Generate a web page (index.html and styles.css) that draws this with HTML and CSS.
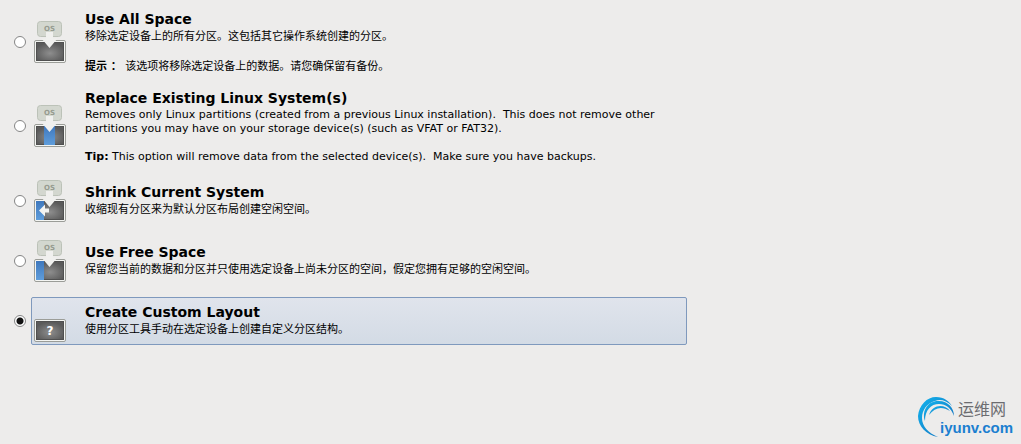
FILE: index.html
```html
<!DOCTYPE html>
<html lang="zh-CN">
<head>
    <meta charset="UTF-8">
    <title>Installation Type</title>
    <link rel="stylesheet" href="styles.css">
</head>
<body>
    <!-- Shared icon parts -->
    <svg class="defs" width="0" height="0" aria-hidden="true">
        <defs>
            <radialGradient id="disk-fill" cx="50%" cy="60%" r="60%">
                <stop offset="0" stop-color="#8e8e8e"/>
                <stop offset="1" stop-color="#5a5a5a"/>
            </radialGradient>
            <linearGradient id="part-fill" x1="0" y1="0" x2="0" y2="1">
                <stop offset="0" stop-color="#3f78bd"/>
                <stop offset="1" stop-color="#5f9ddb"/>
            </linearGradient>
            <linearGradient id="arc-fill" x1="0" y1="0" x2="1" y2="1">
                <stop offset="0" stop-color="#12b4ee"/>
                <stop offset="1" stop-color="#1670bd"/>
            </linearGradient>
            <g id="disk">
                <rect x="0.5" y="20.5" width="31" height="22" rx="1.5" fill="#f4f5f2" stroke="#9b9d98"/>
                <rect x="2" y="22" width="28" height="19" fill="#505050"/>
                <rect x="3" y="23" width="26" height="17" fill="url(#disk-fill)"/>
            </g>
            <g id="os">
                <rect x="3.5" y="1.5" width="24" height="15" rx="3" fill="#d3d7cf" stroke="#bcc2b8"/>
                <text class="os-text" x="15.5" y="11" text-anchor="middle">OS</text>
                <path d="M12 12h7v6.500h4.500l-8 9.500-8-9.500h4.500z" fill="#f0f0ee"/>
            </g>
        </defs>
    </svg>

    <form class="options">
        <div class="option">
            <input type="radio" name="layout" id="all">
            <label class="card" for="all">
                <svg class="icon" viewBox="0 0 32 44" aria-hidden="true">
                    <use href="#disk"/>
                    <use href="#os"/>
                </svg>
                <span class="text">
                    <strong class="title">Use All Space</strong>
                    <span class="desc">移除选定设备上的所有分区。这包括其它操作系统创建的分区。</span>
                    <span class="desc tip"><b>提示 ：</b> 该选项将移除选定设备上的数据。请您确保留有备份。</span>
                </span>
            </label>
        </div>

        <div class="option">
            <input type="radio" name="layout" id="replace">
            <label class="card" for="replace">
                <svg class="icon" viewBox="0 0 32 44" aria-hidden="true">
                    <use href="#disk"/>
                    <rect x="10" y="22" width="11" height="19" fill="url(#part-fill)"/>
                    <use href="#os"/>
                </svg>
                <span class="text english">
                    <strong class="title">Replace Existing Linux System(s)</strong>
                    <span class="desc">Removes only Linux partitions (created from a previous Linux installation).  This does not remove other partitions you may have on your storage device(s) (such as VFAT or FAT32).</span>
                    <span class="desc tip"><b>Tip:</b> This option will remove data from the selected device(s).  Make sure you have backups.</span>
                </span>
            </label>
        </div>

        <div class="option">
            <input type="radio" name="layout" id="shrink">
            <label class="card" for="shrink">
                <svg class="icon" viewBox="0 0 32 44" aria-hidden="true">
                    <use href="#disk"/>
                    <rect x="2" y="22" width="8" height="19" fill="url(#part-fill)"/>
                    <use href="#os"/>
                    <path d="M5 31.500l6-6v4h4v4h-4v4z" fill="#f3f3f1"/>
                </svg>
                <span class="text brief">
                    <strong class="title">Shrink Current System</strong>
                    <span class="desc">收缩现有分区来为默认分区布局创建空闲空间。</span>
                </span>
            </label>
        </div>

        <div class="option">
            <input type="radio" name="layout" id="free">
            <label class="card" for="free">
                <svg class="icon" viewBox="0 0 32 44" aria-hidden="true">
                    <use href="#disk"/>
                    <rect x="2" y="22" width="8" height="19" fill="url(#part-fill)"/>
                    <use href="#os"/>
                </svg>
                <span class="text brief">
                    <strong class="title">Use Free Space</strong>
                    <span class="desc">保留您当前的数据和分区并只使用选定设备上尚未分区的空间，假定您拥有足够的空闲空间。</span>
                </span>
            </label>
        </div>

        <div class="option">
            <input type="radio" name="layout" id="custom" checked>
            <label class="card" for="custom">
                <svg class="icon" viewBox="0 0 32 44" aria-hidden="true">
                    <use href="#disk"/>
                    <text class="question" x="16" y="36" text-anchor="middle">?</text>
                </svg>
                <span class="text brief">
                    <strong class="title">Create Custom Layout</strong>
                    <span class="desc">使用分区工具手动在选定设备上创建自定义分区结构。</span>
                </span>
            </label>
        </div>
    </form>

    <!-- Site watermark -->
    <svg class="watermark" viewBox="0 0 100 42" role="img" aria-label="运维网 iyunv.com">
        <path d="M20 40C8 38 0 29 0 19C1 8 9 0 18 0C26 0 31 4 34 9C28 3 22 2 17 4C9 6 4 13 4 21C4 29 10 36 20 40z" fill="url(#arc-fill)"/>
        <path d="M7 24C3 12 12 3 21 4C30 4 36 11 36 19C33 11 28 7 21 7C13 7 7 13 7 24z" fill="url(#arc-fill)"/>
        <path d="M11 18C14 8 26 6 32 14C24 9 17 10 11 18z" fill="url(#arc-fill)"/>
        <text class="mark-cn" x="40" y="18">运维网</text>
        <text class="mark-url" x="22" y="36">iyunv.com</text>
    </svg>
</body>
</html>
```
FILE: styles.css
```css
body {
    margin: 0;
    background-color: #edeceb;
    color: #000;
    font-family: "DejaVu Sans", "Noto Sans CJK SC", sans-serif;
    font-size: 11px;
    line-height: 15px;
}
.defs {
    position: absolute;
}
.options {
    display: flex;
    flex-direction: column;
    gap: 12px;
    max-width: 673px;
    padding: 8px 14px 0;
}
.option {
    display: flex;
    align-items: center;
    gap: 5px;
}
.option input {
    appearance: none;
    flex: none;
    width: 12px;
    height: 12px;
    margin: 0;
    border: 1px solid #858585;
    border-radius: 50%;
    background-color: #fff;
}
.option input:checked {
    background-image: radial-gradient(circle, #111 3px, #fff 4px);
}
.card {
    display: flex;
    flex: 1;
    align-items: center;
    gap: 19px;
    box-sizing: border-box;
    min-height: 48px;
    padding: 0 2px;
    border: 1px solid transparent;
    border-radius: 2px;
}
.option input:checked + .card {
    border-color: #7f99bd;
    background-image: linear-gradient(#e0e4ec, #d3dbe5);
}
.icon {
    flex: none;
    width: 32px;
    height: 44px;
}
.os-text {
    fill: #969b90;
    font-size: 7px;
    font-weight: bold;
}
.question {
    fill: #fff;
    font-size: 12px;
    font-weight: bold;
}
.text {
    display: flex;
    flex: 1;
    flex-direction: column;
    padding-top: 1px;
}
.brief {
    padding-bottom: 3px;
}
.title {
    margin-bottom: 1px;
    font-size: 14px;
    line-height: 18px;
}
.desc {
    white-space: pre-wrap;
}
.tip {
    margin-top: 15px;
}
.english {
    line-height: 14px;
}
.english .tip {
    margin-top: 14px;
}
.watermark {
    position: absolute;
    right: 3px;
    bottom: 5px;
    width: 100px;
    height: 42px;
}
.mark-cn {
    fill: #6c6c70;
    font-family: "Noto Sans CJK SC", sans-serif;
    font-size: 16px;
}
.mark-url {
    fill: #1b7fd0;
    font-family: "Liberation Sans", sans-serif;
    font-size: 15px;
    font-weight: bold;
}
```
